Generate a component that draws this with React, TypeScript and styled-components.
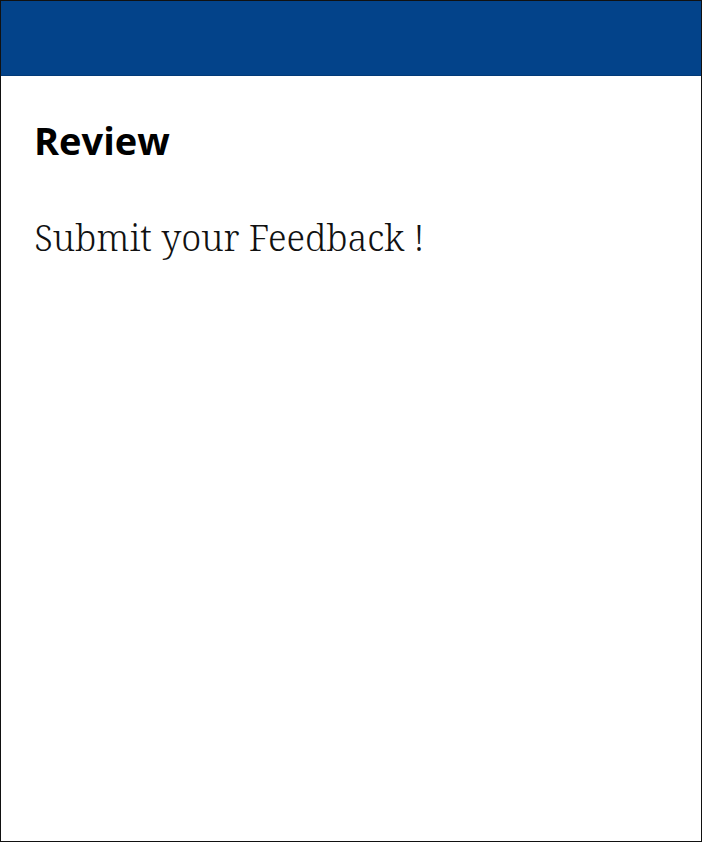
import React from 'react';
import styled, { createGlobalStyle } from 'styled-components';

const GlobalStyle = createGlobalStyle`
  html, body {
    margin: 0;
    padding: 0;
    background: #ffffff;
  }

  * {
    box-sizing: border-box;
  }
`;

const Page = styled.div`
  border: 1px solid #111111;
  display: flex;
  flex-direction: column;
  height: 842px;
  width: 702px;
`;

const Header = styled.header`
  background: #03438a;
  border-bottom: 1px solid #023a78;
  flex: 0 0 75px;
`;

const Content = styled.main`
  display: flex;
  flex-direction: column;
  padding: 40px 33px;
`;

const Title = styled.h1`
  color: #000000;
  font-family: 'Open Sans', sans-serif;
  font-size: 38px;
  font-weight: 700;
  line-height: 48px;
  margin: 0;
`;

const Subtitle = styled.p`
  color: #111111;
  font-family: 'Noto Serif', 'DejaVu Serif', serif;
  font-size: 36px;
  font-weight: 300;
  line-height: 48px;
  margin: 50px 0 0;
`;

function App (): React.ReactElement {
  return (
    <Page>
      <GlobalStyle />
      <Header />
      <Content>
        <Title>Review</Title>
        <Subtitle>Submit your Feedback !</Subtitle>
      </Content>
    </Page>
  );
}

export default App;
